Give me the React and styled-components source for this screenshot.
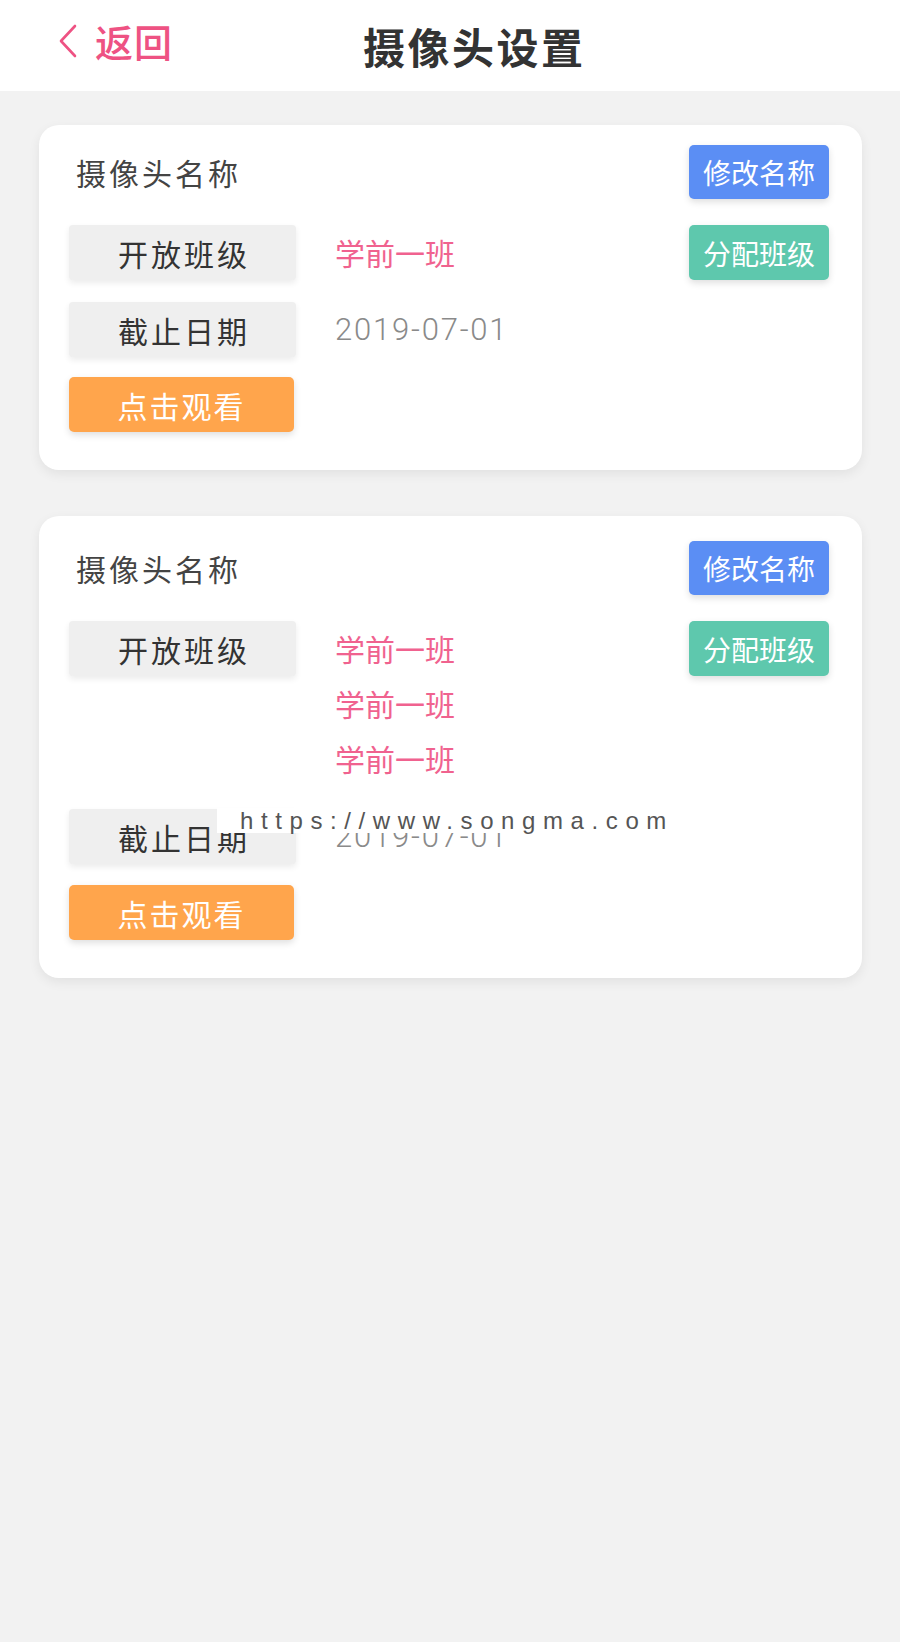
import React from "react";
import styled, { createGlobalStyle } from "styled-components";

const GlobalStyle = createGlobalStyle`
  html, body {
    margin: 0;
    padding: 0;
    background: #f2f2f2;
  }
  body {
    font-family: "Noto Sans CJK SC", "Noto Sans", sans-serif;
    color: #333;
  }
  * { box-sizing: border-box; }
`;

const Page = styled.div`
  position: relative;
  min-height: 1642px;
  background: #f2f2f2;
  overflow: hidden;
`;

const Header = styled.header`
  height: 91px;
  background: #ffffff;
  display: flex;
  align-items: center;
  padding-left: 58px;
`;

const Back = styled.div`
  display: flex;
  align-items: center;
  gap: 17px;
  padding-bottom: 10px;
  color: #ee5283;
  font-size: 38px;
  letter-spacing: 1px;
  font-weight: 500;
  line-height: 1;
  cursor: pointer;
`;

const Title = styled.h1`
  margin: 0 0 0 190px;
  font-size: 42px;
  font-weight: 700;
  letter-spacing: 2.5px;
  color: #333333;
  line-height: 1;
`;

const Card = styled.section`
  margin: ${(p) => p.$mt}px 38px 0 39px;
  padding: ${(p) => p.$pt}px 33px 38px 30px;
  background: #ffffff;
  border-radius: 20px;
  box-shadow: 0 4px 12px rgba(0, 0, 0, 0.07);
`;

const TopRow = styled.div`
  display: grid;
  grid-template-columns: 1fr 140px;
  align-items: center;
  height: 54px;
`;

const CameraName = styled.div`
  padding-left: 7px;
  font-size: 30px;
  letter-spacing: 3px;
  color: #444444;
  line-height: 1;
`;

const Rows = styled.div`
  margin-top: 26px;
  display: flex;
  flex-direction: column;
  gap: ${(p) => p.$gap}px;
`;

const Row = styled.div`
  display: grid;
  grid-template-columns: 227px 1fr 140px;
  align-items: start;
`;

const LabelBox = styled.div`
  height: 55px;
  display: flex;
  align-items: center;
  justify-content: center;
  background: #efefef;
  border-radius: 4px;
  box-shadow: 0 3px 6px rgba(0, 0, 0, 0.08);
  font-size: 30px;
  letter-spacing: 3px;
  padding-left: 3px;
  color: #333333;
`;

const ValueList = styled.div`
  padding-left: 39px;
  padding-bottom: 2px;
  display: flex;
  flex-direction: column;
`;

const ClassName = styled.div`
  height: 55px;
  line-height: 55px;
  font-size: 30px;
  color: #f0628f;
`;

const DateValue = styled.div`
  padding-left: 39px;
  height: 55px;
  line-height: 55px;
  font-family: Roboto, "Liberation Sans", sans-serif;
  font-size: 31px;
  letter-spacing: 1.8px;
  color: #8a8a8a;
  font-weight: 300;
`;

const ActionButton = styled.button`
  height: ${(p) => (p.$h ? p.$h : 55)}px;
  width: ${(p) => (p.$w ? `${p.$w}px` : "100%")};
  border: none;
  border-radius: 5px;
  background: ${(p) => p.$bg};
  color: #ffffff;
  font-family: "Noto Sans CJK SC", "Noto Sans", sans-serif;
  font-size: ${(p) => (p.$fs ? p.$fs : 28)}px;
  letter-spacing: ${(p) => (p.$ls ? p.$ls : 0)}px;
  padding: 0;
  display: flex;
  align-items: center;
  justify-content: center;
  box-shadow: 0 3px 7px rgba(0, 0, 0, 0.13);
  cursor: pointer;
`;

const Watermark = styled.div`
  position: absolute;
  left: 217px;
  top: 808px;
  width: 330px;
  height: 25px;
  background: #ffffff;
  padding-left: 23px;
  font-family: "Liberation Sans", Arial, sans-serif;
  font-size: 24px;
  line-height: 25px;
  letter-spacing: 7.6px;
  color: #555555;
  white-space: nowrap;
  overflow: visible;
`;

function Chevron() {
  return (
    <svg width="20" height="34" viewBox="0 0 20 34" fill="none">
      <path
        d="M17 2 L3 17 L17 32"
        stroke="#ee5283"
        strokeWidth="2.6"
        strokeLinecap="round"
        strokeLinejoin="round"
      />
    </svg>
  );
}

const cameras = [
  { id: 1, classes: ["学前一班"], date: "2019-07-01", mt: 34, pt: 20, gap: 20 },
  { id: 2, classes: ["学前一班", "学前一班", "学前一班"], date: "2019-07-01", mt: 46, pt: 25, gap: 21 },
];

function CameraCard({ cam }) {
  return (
    <Card $mt={cam.mt} $pt={cam.pt}>
      <TopRow>
        <CameraName>摄像头名称</CameraName>
        <ActionButton $bg="#5b8ef4" $h={54}>修改名称</ActionButton>
      </TopRow>
      <Rows $gap={cam.gap}>
        <Row>
          <LabelBox>开放班级</LabelBox>
          <ValueList>
            {cam.classes.map((c, i) => (
              <ClassName key={i}>{c}</ClassName>
            ))}
          </ValueList>
          <ActionButton $bg="#5ec8ad">分配班级</ActionButton>
        </Row>
        <Row>
          <LabelBox>截止日期</LabelBox>
          <DateValue>{cam.date}</DateValue>
        </Row>
        <Row>
          <ActionButton $bg="#ffa54c" $w={225} $fs={30} $ls={2}>
            点击观看
          </ActionButton>
        </Row>
      </Rows>
    </Card>
  );
}

export default function App() {
  return (
    <Page>
      <GlobalStyle />
      <Header>
        <Back>
          <Chevron />
          <span>返回</span>
        </Back>
        <Title>摄像头设置</Title>
      </Header>
      {cameras.map((cam) => (
        <CameraCard key={cam.id} cam={cam} />
      ))}
      <Watermark>https://www.songma.com</Watermark>
    </Page>
  );
}
